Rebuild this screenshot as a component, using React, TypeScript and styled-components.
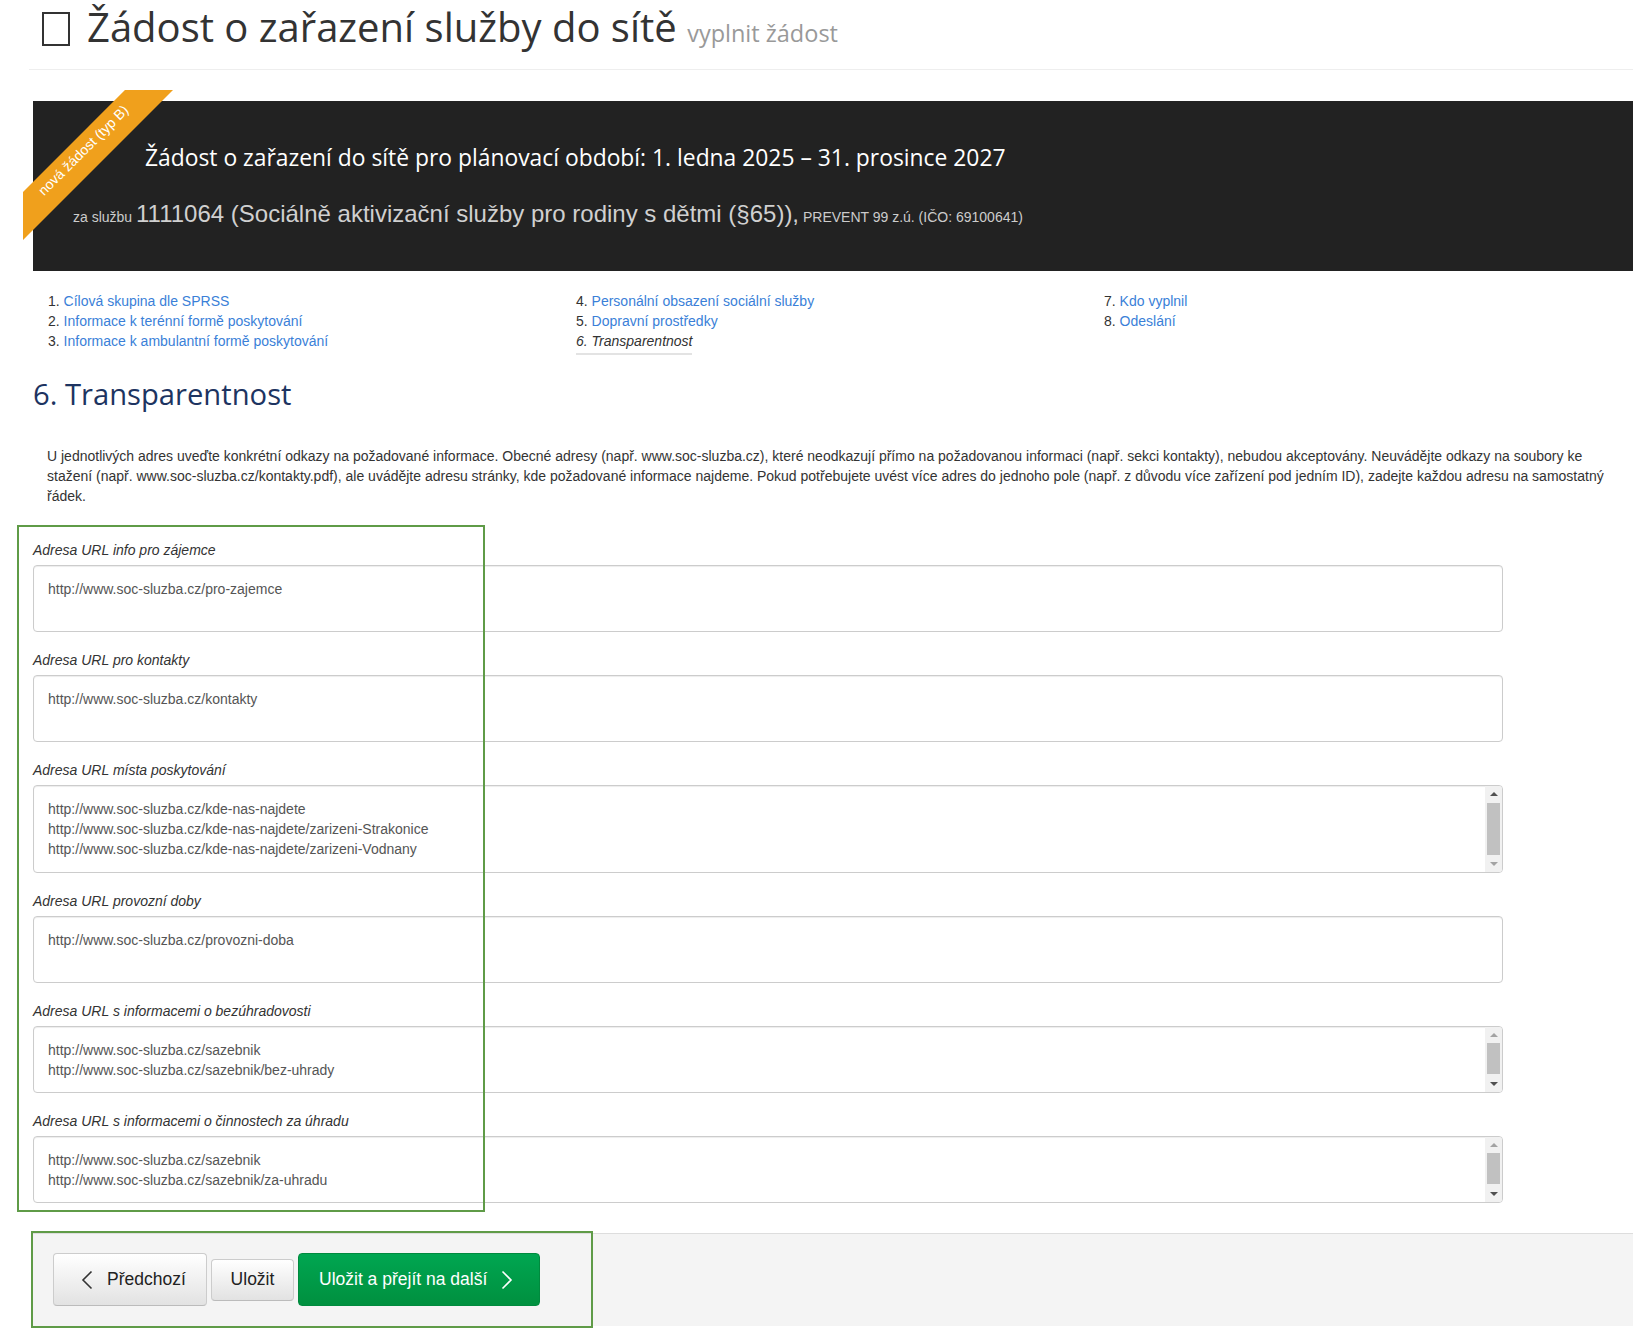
import React from 'react';
import styled, { createGlobalStyle, css } from 'styled-components';

const GlobalStyle = createGlobalStyle`
  html, body { margin: 0; padding: 0; background: #fff; }
  body { font-family: Arial, "Liberation Sans", sans-serif; color: #333; }
  * { box-sizing: border-box; }
`;

const Page = styled.div`
  position: relative;
  width: 1633px;
  min-height: 1338px;
  overflow: hidden;
`;

const Header = styled.header`
  margin-left: 29px;
  padding: 5px 0 14px 13px;
  border-bottom: 1px solid #eee;
`;

const HeaderTitle = styled.h1`
  display: flex;
  align-items: flex-start;
  margin: 0;
  font-family: "Open Sans", "Noto Sans", sans-serif;
  font-weight: 400;
  font-size: 40px;
  line-height: 44px;
  color: #333;
`;

const TofuIcon = styled.span`
  display: block;
  width: 28px;
  height: 34px;
  margin: 7px 17px 0 0;
  border: 2px solid #333;
`;

const Subtitle = styled.small`
  font-size: 23.5px;
  color: #999;
`;

const Banner = styled.section`
  position: relative;
  margin: 31px 0 0 33px;
  height: 170px;
  padding: 42px 0 0 40px;
  background: #222;
`;

const BannerTitle = styled.h2`
  margin: 0 0 26px 72px;
  font-family: "Open Sans", "Noto Sans", sans-serif;
  font-weight: 400;
  font-size: 22.85px;
  line-height: 30px;
  color: #fff;
`;

const BannerService = styled.div`
  font-family: Arial, "Liberation Sans", sans-serif;
  line-height: 30px;
  color: #ccc;
  font-size: 14px;
`;

const ServiceName = styled.span`
  font-size: 24px;
  color: #d0d0d0;
`;

const RibbonCorner = styled.div`
  position: absolute;
  left: -10px;
  top: -11px;
  width: 150px;
  height: 150px;
  overflow: hidden;
  pointer-events: none;
`;

const RibbonBand = styled.div`
  position: absolute;
  left: -47px;
  top: 46px;
  width: 220px;
  height: 34px;
  padding-bottom: 7px;
  transform: rotate(-45deg);
  background: #f0a01c;
  color: #fff;
  font-size: 14px;
  line-height: 27px;
  text-align: center;
  white-space: nowrap;
`;

const StepNav = styled.nav`
  display: grid;
  grid-template-columns: repeat(3, 528px);
  margin: 20px 0 0 33px;
  align-items: start;
`;

const StepList = styled.ol`
  list-style: none;
  margin: 0;
  padding: 0 0 0 15px;
  font-size: 14px;
  line-height: 20px;
`;

const StepItem = styled.li`
  color: #333;
`;

const StepLink = styled.a`
  color: #3a7fd8;
  text-decoration: none;
`;

const StepCurrent = styled.span`
  display: inline-block;
  font-style: italic;
  color: #333;
  padding-bottom: 2px;
  border-bottom: 2px solid #e3e3e3;
`;

const SectionHeading = styled.h3`
  margin: 23px 0 0 33px;
  font-family: "Open Sans", "Noto Sans", sans-serif;
  font-weight: 400;
  font-size: 29.2px;
  line-height: 32px;
  color: #1d3461;
`;

const Intro = styled.p`
  margin: 36px 0 0;
  padding: 0 15px 0 47px;
  font-size: 14px;
  line-height: 20px;
  color: #333;
`;

const Form = styled.form`
  display: flex;
  flex-direction: column;
  gap: 18px;
  width: 1470px;
  margin: 34px 0 0 33px;
`;

const FieldGroup = styled.div`
  display: flex;
  flex-direction: column;
`;

const FieldLabel = styled.label`
  font-size: 14px;
  line-height: 20px;
  font-style: italic;
  color: #333;
  margin-bottom: 5px;
`;

const FieldBox = styled.div<{ $height: number }>`
  display: flex;
  height: ${(p) => p.$height}px;
  border: 1px solid #ccc;
  border-radius: 4px;
  box-shadow: inset 0 1px 1px rgba(0, 0, 0, 0.075);
  background: #fff;
  overflow: hidden;
`;

const UrlArea = styled.textarea`
  flex: 1;
  border: none;
  outline: none;
  resize: none;
  overflow: hidden;
  background: transparent;
  padding: 13px 14px;
  font-family: Arial, "Liberation Sans", sans-serif;
  font-size: 14px;
  line-height: 20px;
  color: #555;
`;

const Scrollbar = styled.div`
  display: flex;
  flex-direction: column;
  width: 17px;
  background: #f1f1f1;
`;

const ScrollArrow = styled.div<{ $dir: 'up' | 'down'; $active: boolean }>`
  display: flex;
  align-items: center;
  justify-content: center;
  height: 16px;
  &::after {
    content: '';
    width: 0;
    height: 0;
    border-left: 4px solid transparent;
    border-right: 4px solid transparent;
    ${(p) =>
      p.$dir === 'up'
        ? css`border-bottom: 4px solid ${p.$active ? '#505050' : '#a3a3a3'};`
        : css`border-top: 4px solid ${p.$active ? '#505050' : '#a3a3a3'};`}
  }
`;

const ScrollTrack = styled.div`
  flex: 1;
`;

const ScrollThumb = styled.div`
  margin: 0 2px;
  background: #c1c1c1;
`;

const Footer = styled.footer`
  display: flex;
  align-items: center;
  gap: 4px;
  margin: 30px 0 0 33px;
  padding: 19px 20px 20px;
  border-top: 1px solid #ddd;
  background: #f4f4f4;
`;

const ActionButton = styled.button<{
  $variant: 'default' | 'primary';
  $width: number;
  $height: number;
  $padLeft?: number;
}>`
  display: inline-flex;
  align-items: center;
  justify-content: ${(p) => (p.$padLeft ? 'flex-start' : 'center')};
  gap: 14px;
  width: ${(p) => p.$width}px;
  height: ${(p) => p.$height}px;
  padding: 0 0 0 ${(p) => p.$padLeft ?? 0}px;
  border-radius: 4px;
  font-family: Arial, "Liberation Sans", sans-serif;
  font-size: 17.5px;
  cursor: pointer;
  ${(p) =>
    p.$variant === 'primary'
      ? css`
          color: #fff;
          border: 1px solid #008a3e;
          background: linear-gradient(#00a651, #00903f);
        `
      : css`
          color: #222;
          border: 1px solid #ccc;
          border-bottom-color: #bbb;
          background: linear-gradient(#fff, #e2e2e2);
        `}
`;

const Annotation = styled.div<{ $x: number; $y: number; $w: number; $h: number }>`
  position: absolute;
  left: ${(p) => p.$x}px;
  top: ${(p) => p.$y}px;
  width: ${(p) => p.$w}px;
  height: ${(p) => p.$h}px;
  border: 2px solid #5f9b47;
  pointer-events: none;
`;

const Chevron = ({ dir, color }: { dir: 'left' | 'right'; color: string }) => (
  <svg width="12" height="20" viewBox="0 0 12 20" fill="none">
    <polyline
      points={dir === 'left' ? '10.5,1.5 2,10 10.5,18.5' : '1.5,1.5 10,10 1.5,18.5'}
      stroke={color}
      strokeWidth="1.6"
      strokeLinejoin="miter"
    />
  </svg>
);

type ScrollInfo = { top: number; height: number; up: boolean; down: boolean };
type Field = { label: string; lines: string[]; height: number; scroll?: ScrollInfo };

const fields: Field[] = [
  { label: 'Adresa URL info pro zájemce', lines: ['http://www.soc-sluzba.cz/pro-zajemce'], height: 67 },
  { label: 'Adresa URL pro kontakty', lines: ['http://www.soc-sluzba.cz/kontakty'], height: 67 },
  {
    label: 'Adresa URL místa poskytování',
    lines: [
      'http://www.soc-sluzba.cz/kde-nas-najdete',
      'http://www.soc-sluzba.cz/kde-nas-najdete/zarizeni-Strakonice',
      'http://www.soc-sluzba.cz/kde-nas-najdete/zarizeni-Vodnany',
    ],
    height: 88,
    scroll: { top: 1, height: 52, up: true, down: false },
  },
  { label: 'Adresa URL provozní doby', lines: ['http://www.soc-sluzba.cz/provozni-doba'], height: 67 },
  {
    label: 'Adresa URL s informacemi o bezúhradovosti',
    lines: ['http://www.soc-sluzba.cz/sazebnik', 'http://www.soc-sluzba.cz/sazebnik/bez-uhrady'],
    height: 67,
    scroll: { top: 0, height: 31, up: false, down: true },
  },
  {
    label: 'Adresa URL s informacemi o činnostech za úhradu',
    lines: ['http://www.soc-sluzba.cz/sazebnik', 'http://www.soc-sluzba.cz/sazebnik/za-uhradu'],
    height: 67,
    scroll: { top: 0, height: 31, up: false, down: true },
  },
];

const steps: { n: number; label: string; current?: boolean }[][] = [
  [
    { n: 1, label: 'Cílová skupina dle SPRSS' },
    { n: 2, label: 'Informace k terénní formě poskytování' },
    { n: 3, label: 'Informace k ambulantní formě poskytování' },
  ],
  [
    { n: 4, label: 'Personální obsazení sociální služby' },
    { n: 5, label: 'Dopravní prostředky' },
    { n: 6, label: 'Transparentnost', current: true },
  ],
  [
    { n: 7, label: 'Kdo vyplnil' },
    { n: 8, label: 'Odeslání' },
  ],
];

export default function App() {
  return (
    <Page>
      <GlobalStyle />
      <Header>
        <HeaderTitle>
          <TofuIcon />
          <span>
            Žádost o zařazení služby do sítě <Subtitle>vyplnit žádost</Subtitle>
          </span>
        </HeaderTitle>
      </Header>

      <Banner>
        <RibbonCorner>
          <RibbonBand>nová žádost (typ B)</RibbonBand>
        </RibbonCorner>
        <BannerTitle>Žádost o zařazení do sítě pro plánovací období: 1. ledna 2025 – 31. prosince 2027</BannerTitle>
        <BannerService>
          za službu <ServiceName>1111064 (Sociálně aktivizační služby pro rodiny s dětmi (§65)),</ServiceName> PREVENT 99 z.ú. (IČO: 69100641)
        </BannerService>
      </Banner>

      <StepNav>
        {steps.map((col, i) => (
          <StepList key={i}>
            {col.map((s) => (
              <StepItem key={s.n}>
                {s.current ? (
                  <StepCurrent>
                    {s.n}. {s.label}
                  </StepCurrent>
                ) : (
                  <>
                    {s.n}. <StepLink href="#">{s.label}</StepLink>
                  </>
                )}
              </StepItem>
            ))}
          </StepList>
        ))}
      </StepNav>

      <SectionHeading>6. Transparentnost</SectionHeading>

      <Intro>
        U jednotlivých adres uveďte konkrétní odkazy na požadované informace. Obecné adresy (např. www.soc-sluzba.cz), které
        neodkazují přímo na požadovanou informaci (např. sekci kontakty), nebudou akceptovány. Neuvádějte odkazy na soubory ke
        stažení (např. www.soc-sluzba.cz/kontakty.pdf), ale uvádějte adresu stránky, kde požadované informace najdeme. Pokud
        potřebujete uvést více adres do jednoho pole (např. z důvodu více zařízení pod jedním ID), zadejte každou adresu na
        samostatný řádek.
      </Intro>

      <Form onSubmit={(e) => e.preventDefault()}>
        {fields.map((f, i) => (
          <FieldGroup key={i}>
            <FieldLabel>{f.label}</FieldLabel>
            <FieldBox $height={f.height}>
              <UrlArea readOnly value={f.lines.join('\n')} />
              {f.scroll && (
                <Scrollbar>
                  <ScrollArrow $dir="up" $active={f.scroll.up} />
                  <ScrollTrack style={{ paddingTop: f.scroll.top }}>
                    <ScrollThumb style={{ height: f.scroll.height }} />
                  </ScrollTrack>
                  <ScrollArrow $dir="down" $active={f.scroll.down} />
                </Scrollbar>
              )}
            </FieldBox>
          </FieldGroup>
        ))}
      </Form>

      <Footer>
        <ActionButton $variant="default" $width={154} $height={53} $padLeft={27} type="button">
          <Chevron dir="left" color="#333" />
          Předchozí
        </ActionButton>
        <ActionButton $variant="default" $width={83} $height={42} type="button">
          Uložit
        </ActionButton>
        <ActionButton $variant="primary" $width={242} $height={53} $padLeft={20} type="button">
          Uložit a přejít na další
          <Chevron dir="right" color="#fff" />
        </ActionButton>
      </Footer>

      <Annotation $x={17} $y={525} $w={468} $h={687} />
      <Annotation $x={31} $y={1231} $w={562} $h={97} />
    </Page>
  );
}
